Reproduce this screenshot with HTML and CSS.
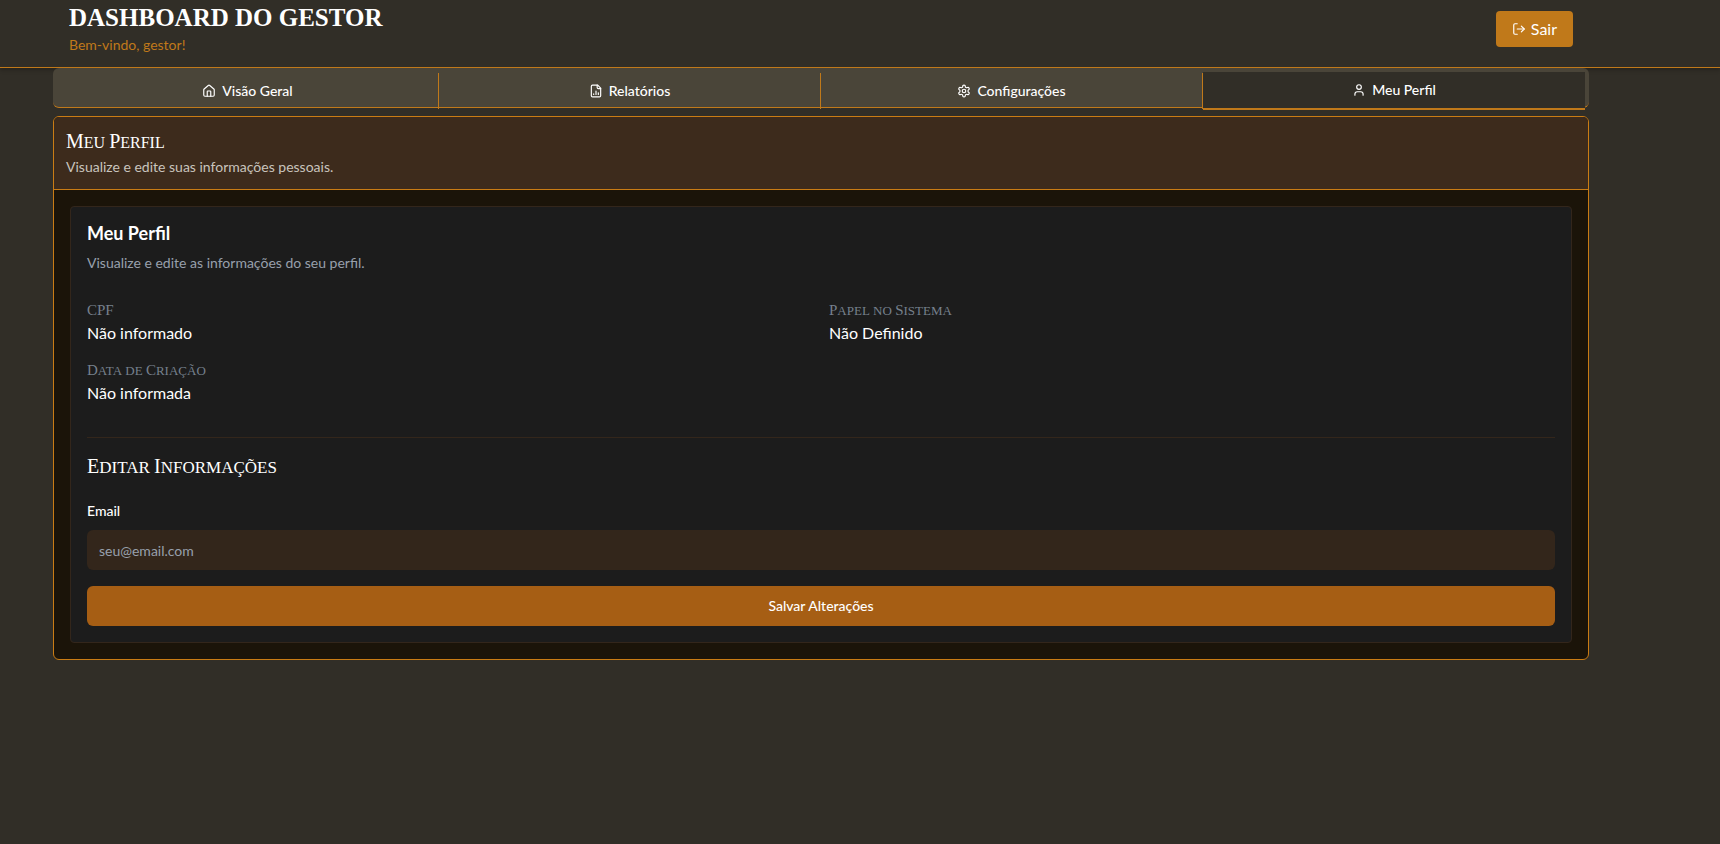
FILE: index.html
```html
<!DOCTYPE html>
<html lang="pt-BR">
<head>
<meta charset="utf-8">
<meta name="viewport" content="width=device-width, initial-scale=1">
<title>Dashboard do Gestor</title>
<link rel="stylesheet" href="styles.css">
</head>
<body>
<header class="topbar">
  <div class="container topbar-inner">
    <div>
      <h1 class="brand">Dashboard do Gestor</h1>
      <p class="welcome">Bem-vindo, gestor!</p>
    </div>
    <button class="logout" type="button">
      <svg class="icon" viewBox="0 0 24 24" aria-hidden="true"><path d="M9 21H5a2 2 0 0 1-2-2V5a2 2 0 0 1 2-2h4"/><path d="m16 17 5-5-5-5"/><path d="M21 12H9"/></svg>
      Sair
    </button>
  </div>
</header>
<main class="container">
  <div class="tabs" role="tablist">
    <button class="tab" type="button" role="tab" aria-selected="false">
      <svg class="icon" viewBox="0 0 24 24" aria-hidden="true"><path d="M15 21v-8a1 1 0 0 0-1-1h-4a1 1 0 0 0-1 1v8"/><path d="M3 10a2 2 0 0 1 .709-1.528l7-5.999a2 2 0 0 1 2.582 0l7 5.999A2 2 0 0 1 21 10v9a2 2 0 0 1-2 2H5a2 2 0 0 1-2-2z"/></svg>
      Visão Geral
    </button>
    <button class="tab" type="button" role="tab" aria-selected="false">
      <svg class="icon" viewBox="0 0 24 24" aria-hidden="true"><path d="M15 2H6a2 2 0 0 0-2 2v16a2 2 0 0 0 2 2h12a2 2 0 0 0 2-2V7Z"/><path d="M14 2v4a2 2 0 0 0 2 2h4"/><path d="M8 18v-1"/><path d="M12 18v-6"/><path d="M16 18v-3"/></svg>
      Relatórios
    </button>
    <button class="tab" type="button" role="tab" aria-selected="false">
      <svg class="icon" viewBox="0 0 24 24" aria-hidden="true"><path d="M12.22 2h-.44a2 2 0 0 0-2 2v.18a2 2 0 0 1-1 1.73l-.43.25a2 2 0 0 1-2 0l-.15-.08a2 2 0 0 0-2.73.73l-.22.38a2 2 0 0 0 .73 2.73l.15.1a2 2 0 0 1 1 1.72v.51a2 2 0 0 1-1 1.74l-.15.09a2 2 0 0 0-.73 2.73l.22.38a2 2 0 0 0 2.73.73l.15-.08a2 2 0 0 1 2 0l.43.25a2 2 0 0 1 1 1.73V20a2 2 0 0 0 2 2h.44a2 2 0 0 0 2-2v-.18a2 2 0 0 1 1-1.73l.43-.25a2 2 0 0 1 2 0l.15.08a2 2 0 0 0 2.73-.73l.22-.39a2 2 0 0 0-.73-2.73l-.15-.08a2 2 0 0 1-1-1.74v-.5a2 2 0 0 1 1-1.74l.15-.09a2 2 0 0 0 .73-2.73l-.22-.38a2 2 0 0 0-2.73-.73l-.15.08a2 2 0 0 1-2 0l-.43-.25a2 2 0 0 1-1-1.73V4a2 2 0 0 0-2-2z"/><circle cx="12" cy="12" r="3"/></svg>
      Configurações
    </button>
    <button class="tab tab-active" type="button" role="tab" aria-selected="true">
      <svg class="icon" viewBox="0 0 24 24" aria-hidden="true"><path d="M19 21v-2a4 4 0 0 0-4-4H9a4 4 0 0 0-4 4v2"/><circle cx="12" cy="7" r="4"/></svg>
      Meu Perfil
    </button>
  </div>

  <section class="panel">
    <div class="panel-head">
      <h2 class="caps panel-title"><span class="cap">Meu</span> <span class="cap">Perfil</span></h2>
      <p class="panel-sub">Visualize e edite suas informações pessoais.</p>
    </div>
    <div class="panel-body">
      <div class="card">
        <h3 class="card-title">Meu Perfil</h3>
        <p class="card-sub">Visualize e edite as informações do seu perfil.</p>
        <dl class="facts">
          <div>
            <dt class="caps fact-name"><span class="full">CPF</span></dt>
            <dd class="fact-value">Não informado</dd>
          </div>
          <div>
            <dt class="caps fact-name"><span class="cap">Papel</span> no <span class="cap">Sistema</span></dt>
            <dd class="fact-value">Não Definido</dd>
          </div>
          <div>
            <dt class="caps fact-name"><span class="cap">Data</span> de <span class="cap">Criação</span></dt>
            <dd class="fact-value">Não informada</dd>
          </div>
        </dl>
        <form class="edit">
          <h3 class="caps edit-title"><span class="cap">Editar</span> <span class="cap">Informações</span></h3>
          <label class="label" for="email">Email</label>
          <input class="input" id="email" type="email" placeholder="seu@email.com">
          <button class="save" type="button">Salvar Alterações</button>
        </form>
      </div>
    </div>
  </section>
</main>
</body>
</html>
```

FILE: styles.css
```css
* {
  box-sizing: border-box;
}

body {
  margin: 0;
  min-height: 100vh;
  background: #312e27;
  color: #fff;
  font-family: Lato, "Open Sans", sans-serif;
  font-size: 14px;
  line-height: 20px;
}

h1, h2, h3, p, dl, dd {
  margin: 0;
}

button, input {
  font: inherit;
  color: inherit;
}

.container {
  max-width: 1536px;
  margin: 0 78px 0 53px;
}

.icon {
  width: 14px;
  height: 14px;
  flex: none;
  fill: none;
  stroke: currentColor;
  stroke-width: 2;
  stroke-linecap: round;
  stroke-linejoin: round;
}

/* Header */
.topbar {
  border-bottom: 1px solid #c0791a;
  box-shadow: 0 2px 4px rgba(0, 0, 0, 0.25);
}

.topbar-inner {
  display: flex;
  justify-content: space-between;
  align-items: flex-start;
  padding: 2px 16px 12px;
}

.brand {
  padding-bottom: 1px;
  font: 700 25px/32px "Liberation Serif", serif;
  text-transform: uppercase;
}

.welcome {
  color: #c0791a;
}

.logout {
  display: flex;
  align-items: center;
  gap: 5px;
  margin-top: 9px;
  padding: 8px 16px;
  border: 0;
  border-radius: 4px;
  background: #c0791a;
  font-size: 16px;
  line-height: 20px;
}

/* Tabs */
.tabs {
  position: relative;
  display: grid;
  grid-template-columns: repeat(4, 1fr);
  align-items: center;
  align-content: start;
  height: 40px;
  padding: 4px 4px 0;
  border-bottom: 1px solid #c0791a;
  border-radius: 6px;
  background: #4a4539;
}

.tab {
  display: flex;
  justify-content: center;
  align-items: center;
  gap: 6px;
  padding: 8px 12px;
  border: 0;
  border-right: 1px solid #c0791a;
  background: none;
  font-weight: 500;
}

.tab-active {
  border-right: 0;
  border-bottom: 2px solid #c0791a;
  background: #312e27;
}

/* Panel */
.panel {
  margin-top: 8px;
  overflow: hidden;
  border: 1px solid #ca7c14;
  border-radius: 6px;
  background: #1b1409;
}

.panel-head {
  padding: 12px;
  border-bottom: 1px solid #ca7c14;
  background: #3d2b1c;
}

.caps {
  font-family: "Liberation Serif", serif;
  font-weight: 400;
  text-transform: uppercase;
}

.cap {
  display: inline-block;
}

.cap,
.full {
  line-height: 1;
}

.panel-title {
  font-size: 16px;
  line-height: 28px;
}

.panel-title .cap::first-letter,
.edit-title .cap::first-letter {
  font-size: 20px;
}

.panel-sub {
  color: #c9c4bd;
}

.panel-body {
  padding: 16px;
}

.card {
  padding: 16px;
  border: 1px solid #33261b;
  border-radius: 4px;
  background: #1c1c1c;
}

.card-title {
  font-size: 18px;
  font-weight: 700;
  line-height: 20px;
}

.card-sub {
  margin-top: 10px;
  color: #98a0ac;
}

.facts {
  display: grid;
  grid-template-columns: repeat(2, 1fr);
  gap: 16px;
  margin-top: 26px;
}

.fact-name {
  color: #76808c;
  font-size: 13px;
  line-height: 24px;
}

.fact-name .full,
.fact-name .cap::first-letter {
  font-size: 15px;
}

.fact-value {
  font-size: 16px;
  line-height: 20px;
}

.edit {
  margin-top: 34px;
  padding-top: 16px;
  border-top: 1px solid #33261b;
}

.edit-title {
  font-size: 17px;
  line-height: 28px;
}

.label {
  display: block;
  margin: 19px 0 9px;
  font-weight: 500;
}

.input {
  display: block;
  width: 100%;
  height: 40px;
  padding: 0 12px;
  border: 0;
  border-radius: 6px;
  background: #33261b;
}

.input::placeholder {
  color: #98a0ac;
  opacity: 1;
}

.save {
  display: block;
  width: 100%;
  height: 40px;
  margin-top: 16px;
  border: 0;
  border-radius: 6px;
  background: #a65e14;
  font-weight: 500;
}
```
